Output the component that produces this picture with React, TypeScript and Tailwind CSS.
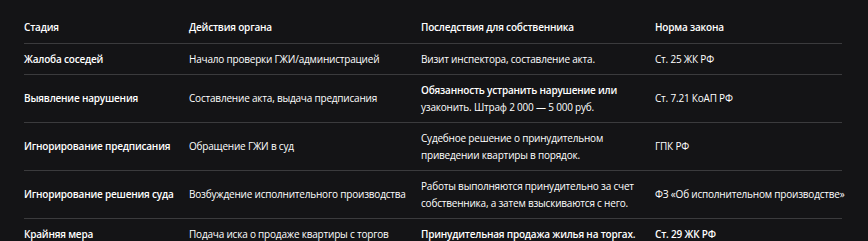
import React from 'react';

type Row = {
    stage: string;
    action: string;
    result: React.ReactNode;
    law: React.ReactNode;
};

const rows: Row[] = [
    {
        stage: 'Жалоба соседей',
        action: 'Начало проверки ГЖИ/администрацией',
        result: 'Визит инспектора, составление акта.',
        law: 'Ст. 25 ЖК РФ',
    },
    {
        stage: 'Выявление нарушения',
        action: 'Составление акта, выдача предписания',
        result: (
            <>
                <strong className="font-semibold">Обязанность устранить нарушение или</strong>
                <br />
                узаконить. Штраф 2 000 — 5 000 руб.
            </>
        ),
        law: 'Ст. 7.21 КоАП РФ',
    },
    {
        stage: 'Игнорирование предписания',
        action: 'Обращение ГЖИ в суд',
        result: (
            <>
                Судебное решение о принудительном
                <br />
                приведении квартиры в порядок.
            </>
        ),
        law: 'ГПК РФ',
    },
    {
        stage: 'Игнорирование решения суда',
        action: 'Возбуждение исполнительного производства',
        result: (
            <>
                Работы выполняются принудительно за счет
                <br />
                собственника, а затем взыскиваются с него.
            </>
        ),
        law: 'ФЗ «Об исполнительном производстве»',
    },
    {
        stage: 'Крайняя мера',
        action: 'Подача иска о продаже квартиры с торгов',
        result: <strong className="font-semibold">Принудительная продажа жилья на торгах.</strong>,
        law: <strong className="font-semibold">Ст. 29 ЖК РФ</strong>,
    },
];

const headers = ['Стадия', 'Действия органа', 'Последствия для собственника', 'Норма закона'];

export default function App() {
    return (
        <div className="min-h-screen bg-[#141416] text-white font-['Open_Sans',sans-serif] text-[10px] leading-[16.5px] tracking-[-0.2px] pl-6 pt-[12px]">
            <table className="w-[818px] border-collapse table-fixed text-left">
                <colgroup>
                    <col className="w-[165px]" />
                    <col className="w-[232px]" />
                    <col className="w-[234px]" />
                    <col className="w-[187px]" />
                </colgroup>
                <thead>
                    <tr className="border-b border-[#3b3b3d]">
                        {headers.map((h) => (
                            <th key={h} className="py-[7px] font-semibold align-middle whitespace-nowrap">
                                {h}
                            </th>
                        ))}
                    </tr>
                </thead>
                <tbody>
                    {rows.map((row, i) => (
                        <tr key={row.stage} className={i < rows.length - 1 ? 'border-b border-[#3b3b3d]' : ''}>
                            <td className="py-[7px] font-semibold align-middle whitespace-nowrap">{row.stage}</td>
                            <td className="py-[7px] align-middle whitespace-nowrap">{row.action}</td>
                            <td className="py-[7px] align-middle whitespace-nowrap">{row.result}</td>
                            <td className="py-[7px] align-middle whitespace-nowrap">{row.law}</td>
                        </tr>
                    ))}
                </tbody>
            </table>
        </div>
    );
}
